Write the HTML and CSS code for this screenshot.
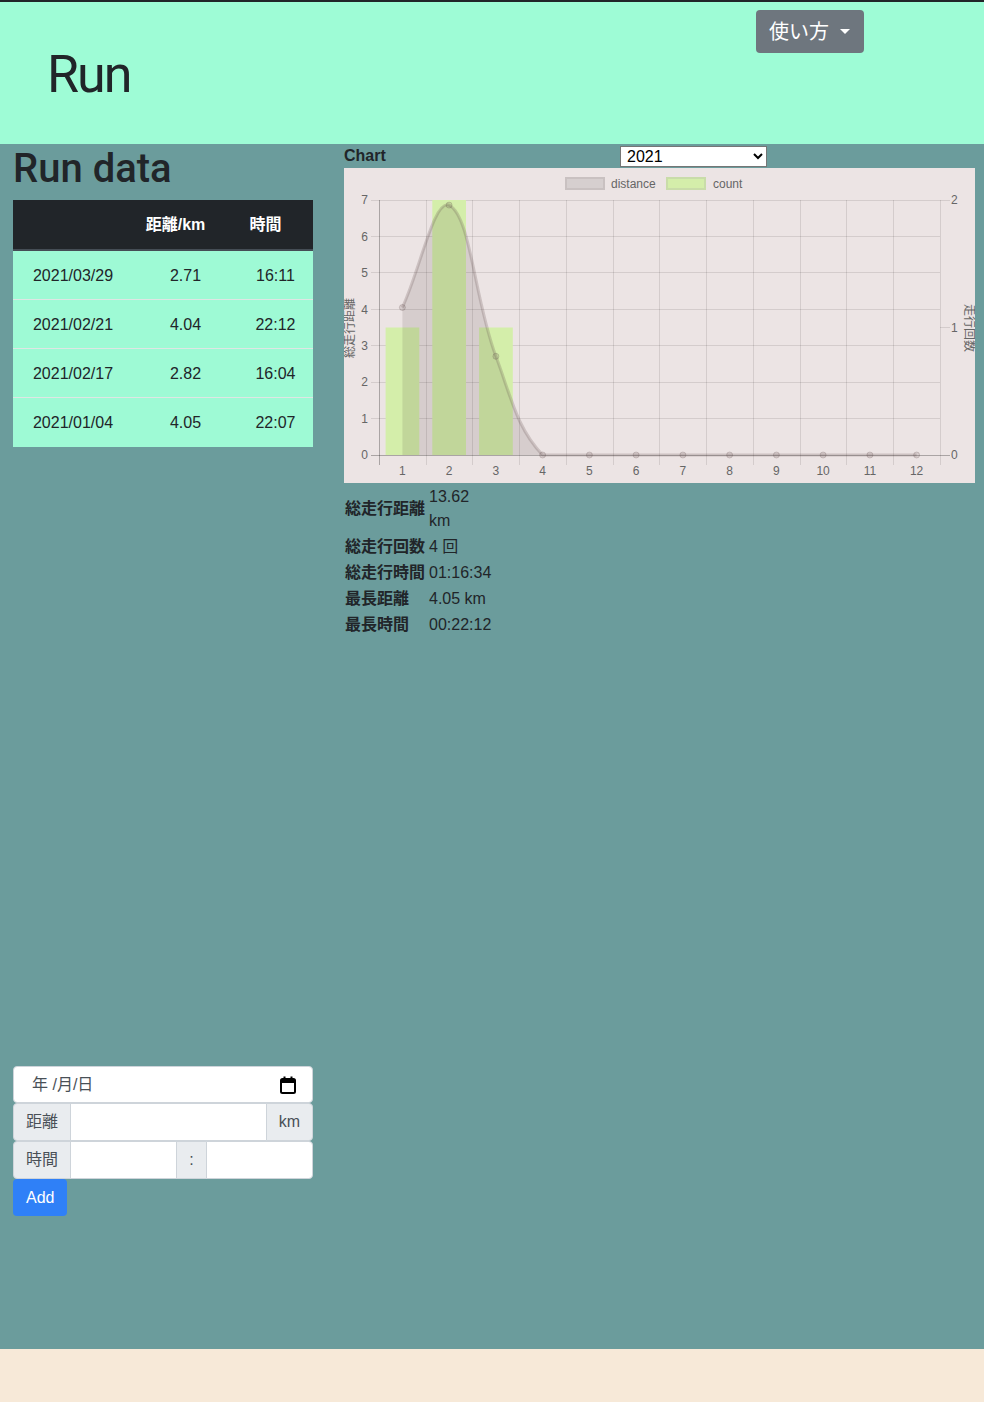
FILE: index.html
```html
<!DOCTYPE html>
<html lang="ja">
<head>
<meta charset="utf-8">
<title>Run</title>
<link rel="stylesheet" href="styles.css">
</head>
<body>
<div class="topbar"></div>
<header class="hero">
  <h1 class="brand">Run</h1>
  <button class="help-btn" type="button">使い方<span class="caret"></span></button>
</header>
<main class="main">
  <section class="left">
    <h2 class="title">Run data</h2>
    <table class="runs">
      <colgroup><col class="c1"><col class="c2"><col class="c3"></colgroup>
      <thead>
        <tr><th></th><th class="shift">距離/km</th><th class="shift">時間</th></tr>
      </thead>
      <tbody>
        <tr><td>2021/03/29</td><td>2.71</td><td>16:11</td></tr>
        <tr><td>2021/02/21</td><td>4.04</td><td>22:12</td></tr>
        <tr><td>2021/02/17</td><td>2.82</td><td>16:04</td></tr>
        <tr class="last-row"><td>2021/01/04</td><td>4.05</td><td>22:07</td></tr>
      </tbody>
    </table>
    <form class="add-form">
      <div class="date-field">
        <span class="date-text">年 /月/日</span>
        <svg class="cal-icon" width="16" height="18" viewBox="0 0 16 18">
          <rect x="1" y="3" width="14" height="14" rx="1.5" fill="none" stroke="#000" stroke-width="2"/>
          <rect x="1" y="3" width="14" height="4" fill="#000"/>
          <rect x="3.5" y="0.5" width="2" height="3" fill="#000"/>
          <rect x="10.5" y="0.5" width="2" height="3" fill="#000"/>
        </svg>
      </div>
      <div class="group">
        <span class="addon first">距離</span>
        <input class="field" type="text">
        <span class="addon last">km</span>
      </div>
      <div class="group">
        <span class="addon first">時間</span>
        <input class="field" type="text">
        <span class="addon">:</span>
        <input class="field last" type="text">
      </div>
      <button class="add-btn" type="button">Add</button>
    </form>
  </section>
  <section class="right">
    <div class="chart-head">
      <span class="chart-label">Chart</span>
      <select class="year"><option>2021</option></select>
    </div>
    <div class="chart">
      <svg width="631" height="315" viewBox="0 0 631 315" class="chart-svg">
        <!-- legend -->
        <rect x="222" y="10" width="38" height="11" fill="#d6cfcf" stroke="#c9c1c1" stroke-width="2"/>
        <text x="267" y="16" class="lbl" dominant-baseline="central">distance</text>
        <rect x="323" y="10" width="38" height="11" fill="#d4eeaa" stroke="#c9dca9" stroke-width="2"/>
        <text x="369" y="16" class="lbl" dominant-baseline="central">count</text>
        <!-- vertical grid -->
        <g stroke="rgba(0,0,0,0.1)" stroke-width="1" shape-rendering="crispEdges">
          <line x1="82.5" y1="32" x2="82.5" y2="297"/>
          <line x1="128.5" y1="32" x2="128.5" y2="297"/>
          <line x1="175.5" y1="32" x2="175.5" y2="297"/>
          <line x1="222.5" y1="32" x2="222.5" y2="297"/>
          <line x1="269.5" y1="32" x2="269.5" y2="297"/>
          <line x1="315.5" y1="32" x2="315.5" y2="297"/>
          <line x1="362.5" y1="32" x2="362.5" y2="297"/>
          <line x1="409.5" y1="32" x2="409.5" y2="297"/>
          <line x1="456.5" y1="32" x2="456.5" y2="297"/>
          <line x1="502.5" y1="32" x2="502.5" y2="297"/>
          <line x1="549.5" y1="32" x2="549.5" y2="297"/>
          <line x1="596.5" y1="32" x2="596.5" y2="297"/>
          <!-- horizontal grid -->
          <line x1="27" y1="32.5" x2="606" y2="32.5"/>
          <line x1="27" y1="68.5" x2="596" y2="68.5"/>
          <line x1="27" y1="104.5" x2="596" y2="104.5"/>
          <line x1="27" y1="141.5" x2="596" y2="141.5"/>
          <line x1="27" y1="177.5" x2="596" y2="177.5"/>
          <line x1="27" y1="214.5" x2="596" y2="214.5"/>
          <line x1="27" y1="250.5" x2="596" y2="250.5"/>
          <line x1="596" y1="159.5" x2="606" y2="159.5"/>
        </g>
        <g stroke="rgba(0,0,0,0.28)" stroke-width="1" shape-rendering="crispEdges">
          <line x1="35.5" y1="32" x2="35.5" y2="297"/>
          <line x1="27" y1="287.5" x2="606" y2="287.5"/>
        </g>
        <!-- bars -->
        <g fill="#d4eeaa">
          <rect x="41.6" y="159.5" width="33.7" height="127.5"/>
          <rect x="88.3" y="32" width="33.7" height="255"/>
          <rect x="135.1" y="159.5" width="33.7" height="127.5"/>
        </g>
        <!-- distance line -->
        <path d="M58.4,139.5 C77.1,98.5 89.6,32 105.1,37.1 C127,48.5 129.8,129.1 151.9,188.3 C167.2,229.1 172.4,259.4 198.6,287 L572.6,287 L58.4,287 Z" fill="rgba(60,40,40,0.12)"/>
        <path d="M58.4,139.5 C77.1,98.5 89.6,32 105.1,37.1 C127,48.5 129.8,129.1 151.9,188.3 C167.2,229.1 172.4,259.4 198.6,287 L572.6,287" fill="none" stroke="rgba(90,70,70,0.22)" stroke-width="3"/>
        <g fill="rgba(90,70,70,0.14)" stroke="rgba(90,70,70,0.22)" stroke-width="1">
          <circle cx="58.4" cy="139.5" r="3"/>
          <circle cx="105.1" cy="37.1" r="3"/>
          <circle cx="151.9" cy="188.3" r="3"/>
          <circle cx="198.6" cy="287" r="3"/>
          <circle cx="245.4" cy="287" r="3"/>
          <circle cx="292.1" cy="287" r="3"/>
          <circle cx="338.9" cy="287" r="3"/>
          <circle cx="385.6" cy="287" r="3"/>
          <circle cx="432.4" cy="287" r="3"/>
          <circle cx="479.1" cy="287" r="3"/>
          <circle cx="525.9" cy="287" r="3"/>
          <circle cx="572.6" cy="287" r="3"/>
        </g>
        <!-- left ticks -->
        <g class="lbl" text-anchor="end" dominant-baseline="central">
          <text x="24" y="32">7</text>
          <text x="24" y="68.5">6</text>
          <text x="24" y="105">5</text>
          <text x="24" y="141.5">4</text>
          <text x="24" y="177.5">3</text>
          <text x="24" y="214">2</text>
          <text x="24" y="250.5">1</text>
          <text x="24" y="287">0</text>
        </g>
        <!-- right ticks -->
        <g class="lbl" text-anchor="start" dominant-baseline="central">
          <text x="607" y="32">2</text>
          <text x="607" y="159.5">1</text>
          <text x="607" y="287">0</text>
        </g>
        <!-- x ticks -->
        <g class="lbl" text-anchor="middle" dominant-baseline="central">
          <text x="58.4" y="303">1</text>
          <text x="105.1" y="303">2</text>
          <text x="151.9" y="303">3</text>
          <text x="198.6" y="303">4</text>
          <text x="245.4" y="303">5</text>
          <text x="292.1" y="303">6</text>
          <text x="338.9" y="303">7</text>
          <text x="385.6" y="303">8</text>
          <text x="432.4" y="303">9</text>
          <text x="479.1" y="303">10</text>
          <text x="525.9" y="303">11</text>
          <text x="572.6" y="303">12</text>
        </g>
        <text class="lbl" text-anchor="middle" dominant-baseline="central" transform="translate(6 160) rotate(-90)">総走行距離</text>
        <text class="lbl" text-anchor="middle" dominant-baseline="central" transform="translate(625 160) rotate(90)">走行回数</text>
      </svg>
    </div>
    <dl class="stats">
      <dt>総走行距離</dt><dd>13.62 km</dd>
      <dt>総走行回数</dt><dd>4 回</dd>
      <dt>総走行時間</dt><dd>01:16:34</dd>
      <dt>最長距離</dt><dd>4.05 km</dd>
      <dt>最長時間</dt><dd>00:22:12</dd>
    </dl>
  </section>
</main>
<footer class="footer"></footer>
</body>
</html>
```
FILE: styles.css
```css
* {
  box-sizing: border-box;
}

body {
  margin: 0;
  font-family: "Liberation Sans", "Noto Sans CJK JP", sans-serif;
  font-size: 16px;
  line-height: 1.5;
  color: #212529;
}

.topbar {
  height: 2px;
  background: #212529;
}

.hero {
  height: 142px;
  background: #9efcd6;
  display: flex;
  align-items: flex-start;
}

.brand {
  margin: 47px 0 0 47px;
  font-family: Roboto, "Liberation Sans", sans-serif;
  font-size: 52px;
  font-weight: 400;
  line-height: 52px;
  letter-spacing: -2px;
  color: #212529;
}

.help-btn {
  margin: 8px 120px 0 auto;
  height: 43px;
  padding: 0 14px 0 13px;
  display: flex;
  align-items: center;
  background: #6e767e;
  color: #fff;
  border: none;
  border-radius: 4px;
  font-family: "Liberation Sans", "Noto Sans CJK JP", sans-serif;
  font-size: 20px;
  line-height: 30px;
}

.caret {
  margin-left: 11px;
  width: 0;
  height: 0;
  border-top: 5px solid #fff;
  border-left: 5px solid transparent;
  border-right: 5px solid transparent;
}

.main {
  display: flex;
  gap: 31px;
  padding-left: 13px;
  height: 1205px;
  background: #6b9c9c;
}

.left {
  width: 300px;
  padding-top: 1px;
}

.title {
  margin: 0 0 7px;
  font-family: Roboto, "Liberation Sans", sans-serif;
  font-size: 40px;
  line-height: 48px;
  font-weight: 500;
}

.runs {
  width: 300px;
  border-collapse: separate;
  border-spacing: 0;
  table-layout: fixed;
}

.c1 { width: 120px; }
.c2 { width: 105px; }
.c3 { width: 75px; }

.runs th {
  background: #212529;
  color: #fff;
  font-weight: 700;
  padding: 12px;
  line-height: 24px;
  border-top: 1px solid #212529;
  border-bottom: 2px solid #454d55;
  text-align: center;
}

.runs th.shift {
  padding-left: 2px;
  padding-right: 22px;
}

.runs td {
  background: #9efad5;
  padding: 13px 12px 11px;
  line-height: 24px;
  border-bottom: 1px solid #dfe6e4;
  text-align: center;
}

.runs .last-row td {
  border-bottom: none;
  padding-bottom: 12px;
}

.add-form {
  margin-top: 619px;
}

.date-field {
  height: 37px;
  display: flex;
  align-items: center;
  justify-content: space-between;
  padding: 0 16px 0 18px;
  background: #fff;
  border: 1px solid #ced4da;
  border-radius: 4px;
  color: #495057;
}

.cal-icon {
  display: block;
}

.group {
  display: flex;
  height: 38px;
}

.addon {
  display: flex;
  align-items: center;
  padding: 0 12px;
  background: #e9ecef;
  border: 1px solid #ced4da;
  color: #495057;
  margin-left: -1px;
}

.addon.first {
  margin-left: 0;
  border-radius: 4px 0 0 4px;
}

.addon.last,
.field.last {
  border-radius: 0 4px 4px 0;
}

.field {
  flex: 1;
  min-width: 0;
  height: 100%;
  margin: 0 0 0 -1px;
  border: 1px solid #ced4da;
  border-radius: 0;
  background: #fff;
  font-family: inherit;
  font-size: 16px;
}

.add-btn {
  height: 37px;
  padding: 0 13px;
  background: #2f80f7;
  color: #fff;
  border: none;
  border-radius: 4px;
  font-family: "Liberation Sans", sans-serif;
  font-size: 16px;
}

.right {
  width: 631px;
}

.chart-head {
  height: 24px;
  display: flex;
  align-items: center;
}

.chart-label {
  width: 276px;
  font-weight: 700;
  line-height: 24px;
}

.year {
  width: 147px;
  height: 21px;
  padding: 0 0 0 2px;
  font-family: "Liberation Sans", sans-serif;
  font-size: 16px;
  color: #000;
  background: #fff;
  border: 1px solid #767676;
  border-radius: 0;
}

.chart {
  width: 631px;
  height: 315px;
  background: #ece4e4;
}

.chart-svg {
  display: block;
}

.lbl {
  font-family: "Liberation Sans", "Noto Sans CJK JP", sans-serif;
  font-size: 12px;
  fill: #666;
}

.stats {
  margin: 0;
  padding: 1px 0 0 1px;
  display: grid;
  grid-template-columns: max-content 64px;
  column-gap: 4px;
  align-items: center;
}

.stats dt {
  font-weight: 700;
  padding: 1px 0;
  line-height: 24px;
}

.stats dd {
  margin: 0;
  padding: 1px 0;
  line-height: 24px;
}

.footer {
  height: 53px;
  background: #f7e9d8;
}
```
